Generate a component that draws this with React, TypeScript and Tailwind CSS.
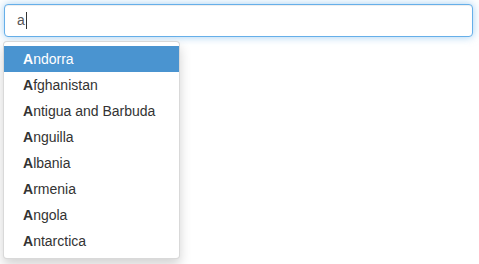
import React from "react";

const items = [
  "Andorra",
  "Afghanistan",
  "Antigua and Barbuda",
  "Anguilla",
  "Albania",
  "Armenia",
  "Angola",
  "Antarctica",
];

export default function App() {
  return (
    <div
      className="w-[479px] h-[264px] bg-white px-[4px] pt-[4px]"
      style={{ fontFamily: '"Liberation Sans", Arial, sans-serif' }}
    >
      <div className="relative w-[469px]">
        <div className="h-[33px] w-full rounded-[4px] border border-[#66afe9] bg-white px-[12px] flex items-center text-[14px] text-[#555] shadow-[inset_0_1px_1px_rgba(0,0,0,0.075),0_0_8px_rgba(102,175,233,0.6)]">
          <span>a</span>
          <span className="ml-[1px] inline-block w-[1px] h-[17px] bg-[#333]" />
        </div>
        <ul className="absolute left-[-1px] top-[37px] w-[177px] rounded-[4px] border border-[rgba(0,0,0,0.15)] bg-white py-[4px] shadow-[0_6px_12px_rgba(0,0,0,0.175)]">
          {items.map((name, i) => (
            <li
              key={name}
              className={
                i === 0
                  ? "h-[26px] px-[19px] flex items-center text-[14px] leading-[20px] text-white bg-[#4a94d0]"
                  : "h-[26px] px-[19px] flex items-center text-[14px] leading-[20px] text-[#333]"
              }
            >
              <span className="whitespace-nowrap">
                <strong className="font-bold">{name[0]}</strong>
                {name.slice(1)}
              </span>
            </li>
          ))}
        </ul>
      </div>
    </div>
  );
}
